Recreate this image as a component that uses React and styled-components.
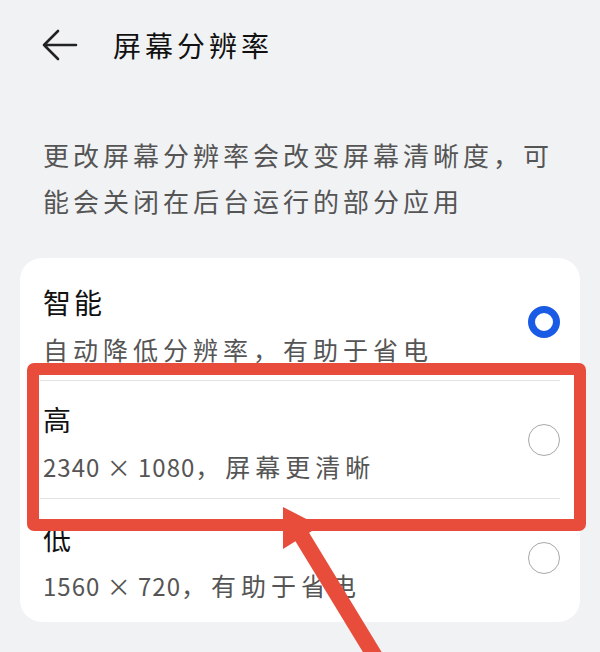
import React from "react";
import styled, { createGlobalStyle } from "styled-components";

const GlobalStyle = createGlobalStyle`
  html, body { margin: 0; padding: 0; background: #f1f2f4; }
  body { font-family: "Noto Sans CJK SC", "Noto Sans", sans-serif; }
`;

const Page = styled.div`
  position: relative;
  width: 600px;
  height: 652px;
  overflow: hidden;
  background: #f1f2f4;
  display: flex;
  flex-direction: column;
`;

const Header = styled.header`
  height: 90px;
  display: flex;
  align-items: center;
  padding-left: 42px;
  gap: 35px;
`;

const BackIcon = styled.svg`
  width: 36px;
  height: 32px;
  flex: none;
`;

const Title = styled.h1`
  margin: 0;
  font-size: 28px;
  font-weight: 400;
  letter-spacing: 4px;
  color: #111;
  line-height: 36px;
`;

const Description = styled.p`
  margin: 42px 0 0;
  padding-left: 43px;
  font-size: 26px;
  letter-spacing: 4px;
  line-height: 46px;
  color: #555;
`;

const Card = styled.section`
  margin: 34px 20px 0;
  background: #fff;
  border-radius: 22px;
  padding: 5px 20px;
`;

const Row = styled.div`
  height: 118px;
  box-sizing: border-box;
  display: flex;
  align-items: center;
  justify-content: space-between;
  border-bottom: ${(p) => (p.$last ? "none" : "1px solid #e3e3e3")};
`;

const Texts = styled.div`
  display: flex;
  flex-direction: column;
  padding-left: 3px;
  gap: 12px;
  margin-top: 6px;
`;

const ItemTitle = styled.div`
  font-size: 28px;
  letter-spacing: 3px;
  line-height: 36px;
  color: #111;
`;

const ItemSub = styled.div`
  font-size: 25px;
  letter-spacing: 5px;
  line-height: 34px;
  color: #555;
  white-space: nowrap;
`;

const Num = styled.span`
  font-size: 24px;
  letter-spacing: 1px;
`;

const Radio = styled.span`
  width: 32px;
  height: 32px;
  box-sizing: border-box;
  border-radius: 50%;
  flex: none;
  border: ${(p) => (p.$checked ? "7px solid #1a5be6" : "1.5px solid #a8a8a8")};
  background: #fff;
`;

const HighlightBox = styled.div`
  position: absolute;
  left: 27px;
  top: 363px;
  width: 559px;
  height: 168px;
  box-sizing: border-box;
  border: 12px solid #e84c3b;
  border-radius: 7px;
  pointer-events: none;
`;

const Pointer = styled.svg`
  position: absolute;
  left: 0;
  top: 0;
  width: 600px;
  height: 652px;
  pointer-events: none;
`;

const items = [
  { title: "智能", sub: <>自动降低分辨率，有助于省电</>, checked: true },
  {
    title: "高",
    sub: (
      <>
        <Num>2340 × 1080</Num>，屏幕更清晰
      </>
    ),
  },
  {
    title: "低",
    sub: (
      <>
        <Num>1560 × 720</Num>，有助于省电
      </>
    ),
  },
];

export default function App() {
  return (
    <Page>
      <GlobalStyle />
      <Header>
        <BackIcon viewBox="0 0 36 32" fill="none">
          <path
            d="M2 16 H34 M16 2 L2 16 L16 30"
            stroke="#222"
            strokeWidth="2.6"
            strokeLinecap="round"
            strokeLinejoin="round"
          />
        </BackIcon>
        <Title>屏幕分辨率</Title>
      </Header>
      <Description>
        更改屏幕分辨率会改变屏幕清晰度，可
        <br />
        能会关闭在后台运行的部分应用
      </Description>
      <Card>
        {items.map((it, i) => (
          <Row key={it.title} $last={i === items.length - 1}>
            <Texts>
              <ItemTitle>{it.title}</ItemTitle>
              <ItemSub>{it.sub}</ItemSub>
            </Texts>
            <Radio $checked={it.checked} />
          </Row>
        ))}
      </Card>
      <HighlightBox />
      <Pointer viewBox="0 0 600 652">
        <line x1="298" y1="530" x2="382" y2="668" stroke="#e84c3b" strokeWidth="16" />
        <polygon points="283,507 283,549 320,526" fill="#e84c3b" />
      </Pointer>
    </Page>
  );
}
